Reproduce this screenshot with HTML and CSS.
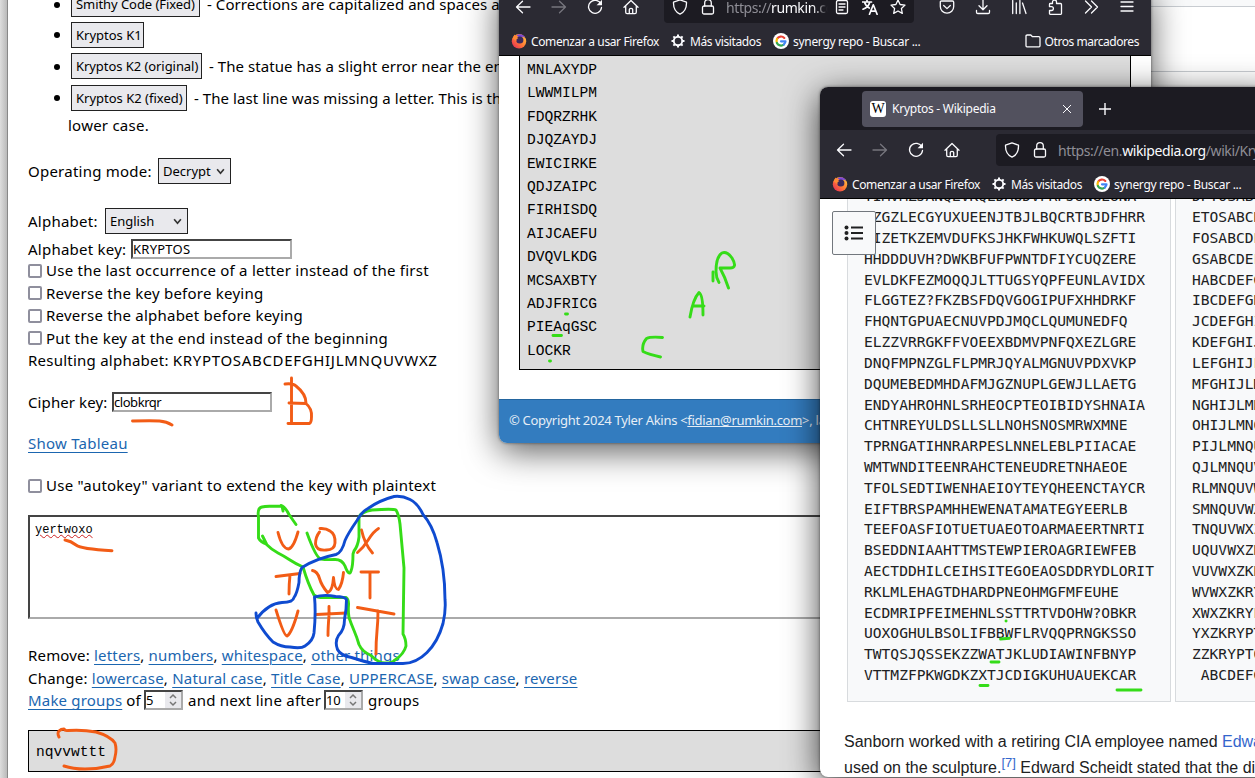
FILE: index.html
```html
<!DOCTYPE html>
<html lang="en">
<head>
<meta charset="utf-8">
<title>Kryptos notes</title>
<link rel="stylesheet" href="styles.css">
</head>
<body>
<svg class="defs" aria-hidden="true">
  <symbol id="back" viewBox="0 0 16 16"><path d="M15 8H1.5M7.5 2.2L1.5 8l6 5.8"/></symbol>
  <symbol id="fwd" viewBox="0 0 16 16"><path d="M1 8h13.5M8.5 2.2l6 5.8-6 5.8"/></symbol>
  <symbol id="reload" viewBox="0 0 16 16"><path d="M13.9 5A6.5 6.5 0 1 0 14.5 8.5"/><path class="solid" d="M15 .8v5.4H9.6z"/></symbol>
  <symbol id="home" viewBox="0 0 16 16"><path d="M1 8.2L8 1.5l7 6.700M2.700 6.800v6.500q0 1.400 1.400 1.400h7.800q1.400 0 1.400-1.400V6.800M6.300 14.500v-4q0-1.200 1.700-1.200t1.700 1.200v4"/></symbol>
  <symbol id="shield" viewBox="0 0 16 16"><path d="M8 .9l6.500 2.300c.2 5.500-1.800 9.800-6.500 11.900C3.300 13 1.300 8.700 1.500 3.200z"/></symbol>
  <symbol id="lock" viewBox="0 0 16 16"><rect x="2.500" y="7" width="11" height="8" rx="1.500"/><path d="M4.700 7V4a3.300 3.300 0 0 1 6.600 0v3"/></symbol>
  <symbol id="reader" viewBox="0 0 16 16"><rect x="2.500" y="1.500" width="11" height="13" rx="1.500"/><path d="M5 5h6M5 8h6M5 11h4"/></symbol>
  <symbol id="translate" viewBox="0 0 16 16"><path d="M.5 3h9M5 .8V3M7.800 3C7 6.500 4.500 8.800 1 10.200M2.500 3c.8 3 2.500 5 4.800 6M7.500 15.300l3.800-9.500 3.800 9.500M8.900 12.200h4.900" stroke-width="1.700"/></symbol>
  <symbol id="star" viewBox="0 0 16 16"><path d="M8 1l2.100 4.500 4.900.6-3.600 3.400.9 4.900L8 12l-4.300 2.400.9-4.900L1 6.100l4.900-.6z"/></symbol>
  <symbol id="pocket" viewBox="0 0 16 16"><path d="M2.500 2h11q1.200 0 1.200 1.200V7.500a6.700 6.700 0 0 1-13.400 0V3.200Q1.300 2 2.500 2zM4.700 6.500L8 9.600l3.300-3.100"/></symbol>
  <symbol id="down" viewBox="0 0 16 16"><path d="M8 1v9.500M4 6.800l4 3.900 4-3.900M1.500 11.500v1.700q0 1.300 1.300 1.300h10.400q1.300 0 1.300-1.300v-1.700"/></symbol>
  <symbol id="library" viewBox="0 0 16 16"><path d="M1.700 1.500v13M5.300 4v10.500M8.900 1.500v13M11.500 4l3.500 10.500"/></symbol>
  <symbol id="puzzle" viewBox="0 0 16 16"><path d="M5.500 4.500V3a2 2 0 0 1 4 0v1.500h4q1 0 1 1v9q0 .8-.8.800H3.300q-.8 0-.8-.8v-3h2a1.900 1.900 0 0 0 0-3.800h-2V5.300q0-.8.8-.8z"/></symbol>
  <symbol id="more" viewBox="0 0 16 16"><path d="M2.500 2l6 6-6 6M8.500 2l6 6-6 6"/></symbol>
  <symbol id="menu" viewBox="0 0 16 16"><path d="M2 3h12M2 7.500h12M2 12h12"/></symbol>
  <symbol id="folder" viewBox="0 0 16 16"><path d="M1 12.800V3.200Q1 2 2.200 2h3.600l1.700 1.700h6.300q1.200 0 1.200 1.200v7.900q0 1-1 1H2q-1 0-1-1z"/></symbol>
  <symbol id="gear" viewBox="0 0 16 16"><path d="M8 1.500v2.500M8 12v2.500M1.500 8H4M12 8h2.500M3.400 3.400l1.700 1.700M10.900 10.900l1.700 1.700M3.400 12.600l1.700-1.700M10.900 5.100l1.700-1.700" stroke-width="2" stroke-linecap="butt"/><circle cx="8" cy="8" r="4.200" stroke-width="1.900"/></symbol>
  <symbol id="firefox" viewBox="0 0 16 16">
    <circle cx="8" cy="8.300" r="7.200" fill="url(#fire)" stroke="none"/>
    <path d="M5.500 2.500C8 0 13 1 14.300 5c-2-1.500-4-1.500-5.500-.5z" fill="#7a45d8" stroke="none"/>
    <circle cx="8.800" cy="7" r="3.600" fill="#3a2a5c" stroke="none"/>
    <path d="M1.400 5.500C2 4 3 3 3.300 1.500c1 .8 1.300 1.800 1.300 2.500 1.200 0 2 .4 2.700 1.300-1.800.4-2.300 1.500-1.700 2.700z" fill="#ff8a35" stroke="none"/>
  </symbol>
  <symbol id="google" viewBox="0 0 16 16">
    <circle cx="8" cy="8" r="8" fill="#fff" stroke="none"/>
    <g stroke-width="2.200"><path d="M11.300 4.900A4.500 4.500 0 0 0 4 6" stroke="#ea4335"/><path d="M4 5.900a4.600 4.600 0 0 0 0 4.200" stroke="#fbbc05"/><path d="M3.900 10a4.600 4.600 0 0 0 7 1.500" stroke="#34a853"/><path d="M10.900 11.500A4.500 4.500 0 0 0 12.500 8.300H8" stroke="#4285f4"/></g>
  </symbol>
  <linearGradient id="fire" x1="1" y1="0" x2="0" y2="1"><stop offset="0" stop-color="#ffd23f"/><stop offset=".5" stop-color="#ff7a35"/><stop offset="1" stop-color="#e3225c"/></linearGradient>
</svg>

<main class="desktop">
  <section class="window cipher">
    <div class="rear"><i></i></div>
    <ul class="samples">
      <li><button class="btn b1">Smithy Code (Fixed)</button><span>- Corrections are capitalized and spaces are</span></li>
      <li><button class="btn b2">Kryptos K1</button></li>
      <li><button class="btn b3">Kryptos K2 (original)</button><span>- The statue has a slight error near the end</span></li>
      <li><button class="btn b4">Kryptos K2 (fixed)</button><span>- The last line was missing a letter. This is the</span></li>
    </ul>
    <p class="row cont">lower case.</p>
    <div class="row mode">Operating mode: <span class="btn select s1">Decrypt<svg viewBox="0 0 8 6"><path d="M1 1l3 3.500L7 1"/></svg></span></div>
    <div class="row alpha">Alphabet: <span class="btn select s2">English<svg viewBox="0 0 8 6"><path d="M1 1l3 3.500L7 1"/></svg></span></div>
    <div class="row key">Alphabet key: <span class="field f1">KRYPTOS</span></div>
    <label class="row check"><i></i><span>Use the last occurrence of a letter instead of the first</span></label>
    <label class="row check"><i></i><span>Reverse the key before keying</span></label>
    <label class="row check"><i></i><span>Reverse the alphabet before keying</span></label>
    <label class="row check"><i></i><span>Put the key at the end instead of the beginning</span></label>
    <div class="row result">Resulting alphabet: <span>KRYPTOSABCDEFGHIJLMNQUVWXZ</span></div>
    <div class="row ckey">Cipher key: <span class="field f2">clobkrqr</span></div>
    <div class="row tableau"><a>Show Tableau</a></div>
    <label class="row check auto"><i></i><span>Use "autokey" variant to extend the key with plaintext</span></label>
    <div class="textarea"><span>yertwoxo</span></div>
    <p class="row remove">Remove: <a>letters</a>, <a>numbers</a>, <a>whitespace</a>, <a>other things</a></p>
    <p class="row change">Change: <a>lowercase</a>, <a>Natural case</a>, <a>Title Case</a>, <a>UPPERCASE</a>, <a>swap case</a>, <a>reverse</a></p>
    <div class="row groups"><span class="lead"><a>Make groups</a> of</span><span class="num">5<svg viewBox="0 0 16 16"><path d="M5 6l3-3 3 3M5 10l3 3 3-3"/></svg></span><span class="mid">and next line after</span><span class="num">10<svg viewBox="0 0 16 16"><path d="M5 6l3-3 3 3M5 10l3 3 3-3"/></svg></span><span>groups</span></div>
    <pre class="output">nqvvwttt</pre>
  </section>

  <section class="window rumkin">
    <header class="toolbar">
      <svg class="ic"><use href="#back"/></svg><svg class="ic dim"><use href="#fwd"/></svg><svg class="ic"><use href="#reload"/></svg><svg class="ic"><use href="#home"/></svg>
      <div class="url"><svg class="ic"><use href="#shield"/></svg><svg class="ic"><use href="#lock"/></svg><span class="addr">https://<b>rumkin.c</b>o</span><svg class="ic"><use href="#reader"/></svg><svg class="ic"><use href="#translate"/></svg><svg class="ic"><use href="#star"/></svg></div>
      <div class="tools"><svg class="ic"><use href="#pocket"/></svg><svg class="ic"><use href="#down"/></svg><svg class="ic"><use href="#library"/></svg><svg class="ic"><use href="#puzzle"/></svg><svg class="ic"><use href="#more"/></svg><svg class="ic"><use href="#menu"/></svg></div>
    </header>
    <nav class="bookmarks">
      <span class="bm1"><svg class="ic"><use href="#firefox"/></svg>Comenzar a usar Firefox</span><span class="bm2"><svg class="ic"><use href="#gear"/></svg>Más visitados</span><span class="bm3"><svg class="ic"><use href="#google"/></svg>synergy repo - Buscar ...</span><span class="other"><svg class="ic"><use href="#folder"/></svg>Otros marcadores</span>
    </nav>
    <div class="body">
<pre class="result-box">MNLAXYDP
LWWMILPM
FDQRZRHK
DJQZAYDJ
EWICIRKE
QDJZAIPC
FIRHISDQ
AIJCAEFU
DVQVLKDG
MCSAXBTY
ADJFRICG
PIEAqGSC
LOCKR</pre>
    </div>
    <footer>© Copyright 2024 Tyler Akins &lt;<u>fidian@rumkin.com</u>&gt;, last</footer>
  </section>

  <section class="window wiki">
    <div class="tabs"><div class="tab"><span class="w">W</span><span class="title">Kryptos - Wikipedia</span><svg class="close" viewBox="0 0 10 10"><path d="M1 1l8 8M9 1L1 9"/></svg></div><svg class="plus" viewBox="0 0 12 12"><path d="M6 0v12M0 6h12"/></svg></div>
    <header class="toolbar">
      <svg class="ic"><use href="#back"/></svg><svg class="ic dim"><use href="#fwd"/></svg><svg class="ic"><use href="#reload"/></svg><svg class="ic"><use href="#home"/></svg>
      <div class="url"><svg class="ic"><use href="#shield"/></svg><svg class="ic"><use href="#lock"/></svg><span class="addr">https://en.<b>wikipedia.org</b>/wiki/Kryptos</span></div>
    </header>
    <nav class="bookmarks">
      <span class="bm1"><svg class="ic"><use href="#firefox"/></svg>Comenzar a usar Firefox</span><span class="bm2"><svg class="ic"><use href="#gear"/></svg>Más visitados</span><span class="bm3"><svg class="ic"><use href="#google"/></svg>synergy repo - Buscar ...</span>
    </nav>
    <div class="article">
      <div class="toc"><svg viewBox="0 0 20 16"><path d="M7 2.500h12M7 8h12M7 13.500h12"/><circle cx="2.500" cy="2.500" r="2"/><circle cx="2.500" cy="8" r="2"/><circle cx="2.500" cy="13.500" r="2"/></svg></div>
      <div class="tables">
<pre>TIMVMZJANQLVKQEDAGDVFRPJUNGEUNA
QZGZLECGYUXUEENJTBJLBQCRTBJDFHRR
YIZETKZEMVDUFKSJHKFWHKUWQLSZFTI
HHDDDUVH?DWKBFUFPWNTDFIYCUQZERE
EVLDKFEZMOQQJLTTUGSYQPFEUNLAVIDX
FLGGTEZ?FKZBSFDQVGOGIPUFXHHDRKF
FHQNTGPUAECNUVPDJMQCLQUMUNEDFQ
ELZZVRRGKFFVOEEXBDMVPNFQXEZLGRE
DNQFMPNZGLFLPMRJQYALMGNUVPDXVKP
DQUMEBEDMHDAFMJGZNUPLGEWJLLAETG
ENDYAHROHNLSRHEOCPTEOIBIDYSHNAIA
CHTNREYULDSLLSLLNOHSNOSMRWXMNE
TPRNGATIHNRARPESLNNELEBLPIIACAE
WMTWNDITEENRAHCTENEUDRETNHAEOE
TFOLSEDTIWENHAEIOYTEYQHEENCTAYCR
EIFTBRSPAMHHEWENATAMATEGYEERLB
TEEFOASFIOTUETUAEOTOARMAEERTNRTI
BSEDDNIAAHTTMSTEWPIEROAGRIEWFEB
AECTDDHILCEIHSITEGOEAOSDDRYDLORIT
RKLMLEHAGTDHARDPNEOHMGFMFEUHE
ECDMRIPFEIMEHNLSSTTRTVDOHW?OBKR
UOXOGHULBSOLIFBBWFLRVQQPRNGKSSO
TWTQSJQSSEKZZWATJKLUDIAWINFBNYP
VTTMZFPKWGDKZXTJCDIGKUHUAUEKCAR</pre>
<pre>DPTOSABCDEF
ETOSABCDEFG
FOSABCDEFGH
GSABCDEFGHI
HABCDEFGHIJ
IBCDEFGHIJL
JCDEFGHIJLM
KDEFGHIJLMN
LEFGHIJLMNQ
MFGHIJLMNQU
NGHIJLMNQUV
OHIJLMNQUVW
PIJLMNQUVWX
QJLMNQUVWXZ
RLMNQUVWXZK
SMNQUVWXZKR
TNQUVWXZKRY
UQUVWXZKRYP
VUVWXZKRYPT
WVWXZKRYPTO
XWXZKRYPTOS
YXZKRYPTOSA
ZZKRYPTOSAB
 ABCDEFGHIJ</pre>
      </div>
      <p class="prose">Sanborn worked with a retiring CIA employee named <a>Edward</a><br>used on the sculpture.<sup>[7]</sup> Edward Scheidt stated that the dia</p>
    </div>
  </section>

  <svg class="ink" viewBox="0 0 1255 778">
    <g class="orange">
      <path d="M291.500 378v44.500M285 384q8-1 11 2q10 8 10 17M289 403l17 .5q6 5 5.500 13q0 6-2 7h-21.500"/>
      <path d="M132.500 421q20-.5 27 0t12.500 4M65 540q6 1 11 5t36 5.700"/>
      <path d="M278 532.500q4 16 10.500 16.500q5-1 9.500-17"/>
      <path d="M319.500 532q-4 5-4 12q1 7 11 6q8 0 8.500-7q.5-9-5-12q-4-3-10-2.500"/>
      <path d="M361.500 530q3 14 11 23M378.500 528.500q-5 3-10 11t-11 13"/>
      <path d="M276 576.500l24-3M290 575q-1 9-1 19M312.500 570.500q5 1 7 8t8 14q5-1 6-15q1 12 5 12q4-6 5-17M361 572h17.500M370 572v26"/>
      <path d="M276 610q8 26 11 26q5-3 11-25M329 606.500v9q-1 12-1 20M316.500 614.500l30-1.500M357.500 607.500l36.500 6.500M378 611q0 10-1 20t-1 23"/>
      <path d="M59 737q-2-4 0-6q2-2 5-2q1 2 4 1.500q15-1 28 1.500q14 4 19 11q2 6 0 14q-1 7-5 9q-12 3-25 3q-12 0-21-3"/>
    </g>
    <g class="green">
      <path d="M296 524.500l-7-10q-4-8-8-9M283 511l-1-5q-15 0-20 1t-3.500 10v21q2 4 8 6l-4-8M266 544q6 6 12 9t12 7t13 7q5 17 11 28q4 3 12 2.500h20q3 2 2.500 8t.5 12q2 6 5 13t5 14q3 7 12 11q8 8 15 7.500q6 0 9-3q9-6 11-14q0-7-3-12l1-66l-4-44q-1-9-4-14q-3-1.500-24 0q-11 2-13 7v20q-1 9-5 14l-1 3q0 12-2 17q-2 6-6-5q-3-7-11-6.500t-13-.5t-14-26"/>
      <path d="M713 272v9M719 282.500q-3-5-3-11q0-15 6-18.500q5-2 10 5q6 10-2 10l-10 0q5 9 8.500 20M690 317q3-18 9-24.500q4 2 4 22.500M693 306h11M662.500 337.500q-12-1-16 1q-5 6-3.500 13q6 3 17.500 5.500M565.500 314h2M553 335.500h8.500M549.500 361h1M1006 621h.1M1000.500 639l9-.8M991 662h8M980 685.500h8M1117 690h24"/>
    </g>
    <path class="blue" d="M256 613q0 5 2 9q7 12 15 20q8 5 17 5q11 2 15-1q8-5 9-13q2-20 .5-36q10-3 21-.5q9 0 11 3q0 10-2 20q0 10-6 16q-4 6-1 14q3 6 14 8q12 4 21.500 6h30q13 0 24-11q11-11 16-29q3-13 2-24q0-31-8-57q-5-18-14-28q-5-11-13-15q-8-4-16-3q-15 4-26 12q-6 3-11 12q-9 13-12 20q-3 12-9 14q-20 4-34 13q-3 5-3 15q-2 11-5 15q-1 5-12 5q-14 1-25 16"/>
  </svg>
</main>
</body>
</html>
```
FILE: styles.css
```css
* { box-sizing: border-box; }
body { margin: 0; }
p, ul, pre { margin: 0; padding: 0; }
.defs { position: absolute; width: 0; height: 0; }
.desktop { position: relative; width: 1255px; height: 778px; overflow: hidden; background: linear-gradient(90deg, #ddd, #b5b5b5 8px); }
.window { position: absolute; overflow: hidden; }

/* Cipher tool */
.cipher { left: 7px; top: 0; width: 1248px; height: 778px; background: #fff; border-left: 1px solid #888; padding-left: 20px; font: 15px/22px "Noto Sans", sans-serif; color: #000; }
.rear { position: absolute; right: 0; top: 0; width: 120px; height: 72px; background: #f8f9fa; border-bottom: 1px solid #c8ccd1; padding-top: 6px; }
.rear i { display: block; height: 65px; background: #fff; border-top: 1px solid #c8ccd1; }
.row { display: flex; align-items: center; white-space: pre; height: 22.500px; letter-spacing: .24px; }
.samples { margin-top: -11px; list-style: none; white-space: nowrap; letter-spacing: .06px; }
.samples li { display: flex; align-items: center; gap: 7px; height: 31.500px; padding-left: 43px; position: relative; }
.samples li::before { content: ""; position: absolute; left: 26px; top: 13px; width: 6px; height: 6px; border-radius: 50%; background: #000; }
.samples li:first-child { height: 30px; }
.btn { display: inline-flex; align-items: center; height: 26px; padding: 0 4px; border: 1px solid #222; border-radius: 0; background: #e9e9ed; font: 13px "Noto Sans", sans-serif; letter-spacing: 0; color: #000; white-space: nowrap; }
.b1 { width: 129px; letter-spacing: -.06px; }
.b2 { width: 73px; }
.b3 { width: 131px; letter-spacing: -.06px; }
.b4 { width: 116px; }
.cont { padding-left: 40px; }
.select { justify-content: space-between; }
.select svg { width: 9px; height: 7px; fill: none; stroke: #333; stroke-width: 1.500; margin-right: 1px; }
.mode, .alpha, .key, .ckey { justify-content: space-between; padding-bottom: 0; }
.mode { margin-top: 22px; height: 26px; width: 203px; }
.s1 { width: 73px; }
.alpha { margin-top: 24px; height: 26px; width: 160px; }
.s2 { width: 83px; }
.key { margin-top: 4px; height: 21px; width: 264px; }
.field { height: 20px; border: 2px solid; border-color: #444 #aaa #aaa #444; font: 13px/16px "Noto Sans", sans-serif; letter-spacing: 0; }
.f1 { width: 161px; letter-spacing: .25px; }
.f2 { width: 160px; letter-spacing: -.45px; flex: none; }
.check i { width: 14px; height: 14px; margin: 1px 4px 0 0; border: 2px solid #8f8f9d; border-radius: 2px; }
.result span { letter-spacing: .68px; }
.ckey { margin-top: 20px; height: 21px; width: 244px; letter-spacing: .1px; }
.tableau { margin-top: 19px; }
.auto { margin-top: 20px; }
a { color: #1b66b0; text-decoration: underline; text-underline-offset: 3px; text-decoration-thickness: 1px; }
.textarea { margin-top: 18px; height: 104px; border: 2px solid; border-color: #444 #aaa #aaa #444; padding: 5px; font: 12px/17px "Liberation Mono", monospace; }
.textarea span { text-decoration: underline wavy #c22 1px; }
.remove { margin-top: 25px; letter-spacing: .18px; }
.change { margin-top: .6px; letter-spacing: .22px; }
.lead { width: 112px; letter-spacing: .18px; }
.mid { width: 132px; }
.num { display: inline-flex; width: 39px; height: 20px; margin: 0 5px 0 4px; border: 2px solid; border-color: #444 #aaa #aaa #444; justify-content: space-between; font: 13px/16px "Noto Sans", sans-serif; letter-spacing: -.3px; }
.num svg { width: 16px; background: #e9e9ed; fill: none; stroke: #777; stroke-width: 1.500; }
.output { margin-top: 18px; height: 42px; border: 1px solid #000; background: #ddd; padding-left: 7px; font: 14.600px/43px "Liberation Mono", monospace; }

/* Browser chrome */
.ic { width: 16px; height: 16px; flex: none; fill: none; stroke: #fbfbfe; stroke-width: 1.300; stroke-linecap: round; stroke-linejoin: round; }
.solid { fill: #fbfbfe; stroke: none; }
.dim { stroke: #77767e; }
.toolbar { display: flex; align-items: center; height: 40px; padding-left: 16px; gap: 20px; background: #2b2a33; }
.url { display: flex; align-items: center; height: 32px; padding-left: 8px; margin-left: 5px; gap: 12px; border-radius: 4px; background: #1c1b22; }
.addr { margin-left: -2px; font: 14px "Noto Sans", sans-serif; letter-spacing: -.4px; color: #8f8e96; white-space: nowrap; overflow: hidden; }
.addr b { font-weight: 400; color: #fbfbfe; }
.bookmarks { display: flex; align-items: center; height: 29px; background: #2b2a33; border-bottom: 1px solid #000; padding-left: 12px; font: 12px "Noto Sans", sans-serif; letter-spacing: -.38px; color: #fbfbfe; white-space: nowrap; }
.bookmarks span { display: flex; align-items: center; gap: 4px; }
.bm1 { width: 159px; }
.bm2 { width: 103px; }
.bookmarks .bm3 { letter-spacing: -.3px; }

/* Result window */
.rumkin { left: 499px; top: -13px; width: 652px; height: 456px; border-radius: 0 0 8px 8px; background: #fff; box-shadow: 0 8px 34px rgba(0,0,0,.65), 0 0 3px rgba(0,0,0,.5); display: flex; flex-direction: column; }
.rumkin .url { width: 250px; padding-right: 8px; }
.rumkin .addr { flex: 1; margin-right: -6px; -webkit-mask-image: linear-gradient(90deg, #000 85%, transparent); mask-image: linear-gradient(90deg, #000 85%, transparent); }
.tools { display: flex; gap: 20px; margin-left: 5px; }
.rumkin .bookmarks { padding-right: 12px; }
.bookmarks .other { margin-left: auto; letter-spacing: -.45px; }
.body { height: 343px; padding: 0 20px; }
.result-box { height: 314px; border: 1px solid #000; border-top: 0; background: #ddd; padding: 3px 7px; font: 14.600px/23.400px "Liberation Mono", monospace; }
.rumkin footer { flex: 1; border-top: 1px solid #23659f; background: #337cbf; color: #e6eef6; padding: 8px 10px; font: 13px/24px "Noto Sans", sans-serif; letter-spacing: -.3px; white-space: nowrap; }

/* Encyclopedia window */
.wiki { left: 820px; top: 87px; width: 460px; height: 690px; border-radius: 8px; background: #fff; box-shadow: 0 8px 34px rgba(0,0,0,.75), 0 0 3px rgba(0,0,0,.5); }
.tabs { display: flex; align-items: center; height: 43px; padding-left: 42px; background: #1c1b22; }
.tab { display: flex; align-items: center; width: 221px; height: 36px; padding: 0 11px 0 8px; border-radius: 4px; background: #52515e; color: #fbfbfe; font: 12px "Noto Sans", sans-serif; letter-spacing: -.25px; }
.w { width: 16px; height: 16px; border-radius: 3px; background: #fff; color: #000; font: 14px/16px "Liberation Serif", serif; text-align: center; }
.title { flex: 1; margin-left: 6px; }
.close { width: 10px; height: 10px; stroke: #fbfbfe; }
.plus { width: 12px; height: 12px; margin-left: 16px; stroke: #fbfbfe; stroke-width: 1.400; }
.wiki .url { flex: 1; margin-left: 16px; }
.article { position: relative; height: 578px; overflow: hidden; padding-left: 27px; }
.toc { position: absolute; left: 12px; top: 12px; width: 44px; height: 44px; border: 1px solid #72777d; border-radius: 2px; background: #f8f9fa; display: flex; align-items: center; justify-content: center; }
.toc svg { width: 20px; height: 16px; stroke: #202122; stroke-width: 1.800; }
.toc circle { stroke: none; fill: #202122; }
.tables { display: flex; gap: 4px; margin-top: -30px; }
.tables pre { flex: none; width: 324px; height: 533px; padding: 16.400px 16px; border: 1px solid #d8dbde; background: #f8f9fa; color: #202122; font: 14.600px/20.820px "DejaVu Sans Mono", monospace; }
.prose { margin: 27px 0 0 -3px; font: 16px/26px "Liberation Sans", sans-serif; color: #202122; white-space: nowrap; }
.prose a { color: #36c; text-decoration: none; }
.prose sup { font-size: 13px; line-height: 1; color: #36c; }

/* Pen marks */
.ink { position: absolute; inset: 0; width: 1255px; height: 778px; fill: none; stroke-width: 2.900; stroke-linecap: round; stroke-linejoin: round; pointer-events: none; }
.orange { stroke: #f25c16; }
.green { stroke: #35dc18; }
.blue { stroke: #0f4bd0; }
```
